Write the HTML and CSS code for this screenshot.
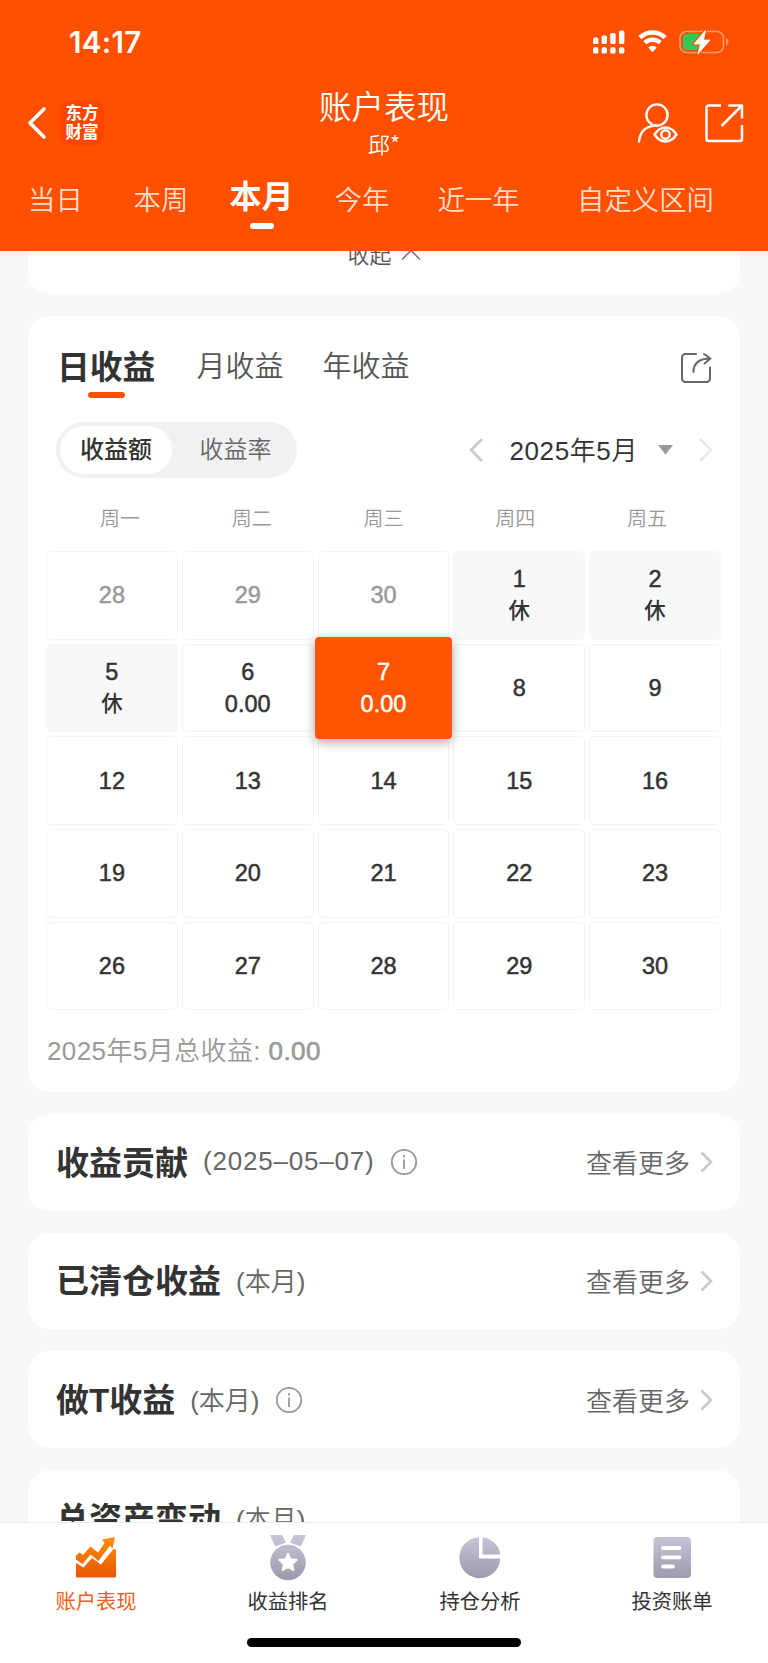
FILE: index.html
```
<!DOCTYPE html>
<html lang="zh-CN">

<head>
    <meta charset="utf-8">
    <meta name="viewport" content="width=device-width, initial-scale=1">
    <title>账户表现</title>
    <link rel="stylesheet" href="styles.css">
</head>

<body>
    <header class="header">
        <div class="status">
            <span class="time">14:17</span>
            <svg class="status-icons" width="136" height="24" viewBox="0 0 136 24" fill="#fff">
                <rect x="0" y="7.5" width="5.4" height="6.5" rx="1.6" />
                <rect x="8.6" y="5.5" width="5.4" height="8.5" rx="1.6" />
                <rect x="17.2" y="3" width="5.4" height="11" rx="1.6" />
                <rect x="26" y="0.5" width="5.4" height="13.5" rx="1.6" />
                <rect x="0" y="17.3" width="5.4" height="6.2" rx="1.6" />
                <rect x="8.6" y="17.3" width="5.4" height="6.2" rx="1.6" />
                <rect x="17.2" y="17.3" width="5.4" height="6.2" rx="1.6" />
                <rect x="26" y="17.3" width="5.4" height="6.2" rx="1.6" />
                <path d="M47 7.6a18 18 0 0 1 25 0" fill="none" stroke="#fff" stroke-width="4.6" />
                <path d="M51.8 12.8a11 11 0 0 1 15.4 0" fill="none" stroke="#fff" stroke-width="4.4" />
                <path d="M55.2 17.4a6.5 6.5 0 0 1 8.6 0L59.5 22.3z" />
                <rect x="87" y="1.5" width="43.5" height="21" rx="6.5" fill="none" stroke="#ff9b6e" stroke-width="1.6" />
                <path d="M133 8.3q2.6 1 2.6 3.7t-2.6 3.7z" fill="#ff9b6e" />
                <path d="M93.5 4H107v16H93.5a3.5 3.5 0 0 1-3.5-3.5v-9A3.5 3.5 0 0 1 93.5 4z" fill="#34c759" />
                <path d="M112.5 0.5L101 14h6.5l-2.7 10L117 10h-6.5z" stroke="#ff5000" stroke-width="3" paint-order="stroke" stroke-linejoin="round" />
                <path d="M112.5 0.5L101 14h6.5l-2.7 10L117 10h-6.5z" stroke="#fff" stroke-width="0.8" stroke-linejoin="round" />
            </svg>
        </div>
        <div class="titlebar">
            <div class="left">
                <svg width="20" height="34" viewBox="0 0 20 34" fill="none" stroke="#fff" stroke-width="3.6" stroke-linecap="round" stroke-linejoin="round">
                    <path d="M17 3L3 17l14 14" />
                </svg>
                <div class="logo">东方<br>财富</div>
            </div>
            <div class="title">
                <h1>账户表现</h1>
                <p>邱*</p>
            </div>
            <div class="right">
                <svg width="42" height="42" viewBox="0 0 42 42" fill="none" stroke="#fff" stroke-width="2.4" stroke-linecap="round">
                    <circle cx="21" cy="13" r="10.6" />
                    <path d="M3 39.5C4 29.5 10 23.6 21 23.6" />
                    <path d="M18.500 32.500Q23 25.500 29.500 25.500T40.500 32.500Q36 39.500 29.500 39.500T18.500 32.500z" stroke-linejoin="round" />
                    <circle cx="29.500" cy="32.500" r="4.200" />
                </svg>
                <svg width="40" height="40" viewBox="0 0 40 40" fill="none" stroke="#fff" stroke-width="2.500" stroke-linecap="butt" stroke-linejoin="round">
                    <path d="M17 2.500H4.500a2 2 0 0 0-2 2V36a2 2 0 0 0 2 2H36a2 2 0 0 0 2-2V22M24.500 2.500H38V15.500M37.500 3L17.500 23" />
                </svg>
            </div>
        </div>
        <nav class="periods">
            <a>当日</a>
            <a>本周</a>
            <a class="active">本月</a>
            <a>今年</a>
            <a>近一年</a>
            <a>自定义区间</a>
        </nav>
    </header>

    <main class="content">
        <section class="card collapse">
            <span>收起</span>
            <svg width="20" height="12" viewBox="0 0 20 12" fill="none" stroke="#777" stroke-width="1.600">
                <path d="M1 10.500L10 1.500l9 9" />
            </svg>
        </section>

        <section class="card calendar">
            <div class="tabs">
                <a class="active">日收益</a>
                <a>月收益</a>
                <a>年收益</a>
                <svg class="share" width="32" height="32" viewBox="0 0 32 32" fill="none" stroke="#666" stroke-width="2" stroke-linecap="round" stroke-linejoin="round">
                    <path d="M16 2H5.500A3.500 3.500 0 0 0 2 5.500v21A3.500 3.500 0 0 0 5.500 30h21a3.500 3.500 0 0 0 3.500-3.500V15.500" />
                    <path d="M13.500 20C13.500 11 18.500 6.500 30.500 6.500M24 2l6.500 4.500-6 5" />
                </svg>
            </div>
            <div class="filter">
                <div class="switch">
                    <span class="on">收益额</span>
                    <span>收益率</span>
                </div>
                <div class="month">
                    <svg width="14" height="24" viewBox="0 0 14 24" fill="none" stroke="#c8c8c8" stroke-width="2.600">
                        <path d="M13 1L2 12l11 11" />
                    </svg>
                    <span class="month-text">2025年5月</span>
                    <svg class="down" width="15" height="10" viewBox="0 0 15 10" fill="#999">
                        <path d="M0 0h15L7.500 9.500z" />
                    </svg>
                    <svg width="14" height="24" viewBox="0 0 14 24" fill="none" stroke="#e8e8e8" stroke-width="2.600">
                        <path d="M1 1l11 11L1 23" />
                    </svg>
                </div>
            </div>
            <div class="week">
                <span>周一</span><span>周二</span><span>周三</span><span>周四</span><span>周五</span>
            </div>
            <div class="days">
                <div class="day old">28</div>
                <div class="day old">29</div>
                <div class="day old">30</div>
                <div class="day rest">1<span>休</span></div>
                <div class="day rest">2<span>休</span></div>
                <div class="day rest">5<span>休</span></div>
                <div class="day">6<span>0.00</span></div>
                <div class="day today">7<span>0.00</span></div>
                <div class="day">8</div>
                <div class="day">9</div>
                <div class="day">12</div>
                <div class="day">13</div>
                <div class="day">14</div>
                <div class="day">15</div>
                <div class="day">16</div>
                <div class="day">19</div>
                <div class="day">20</div>
                <div class="day">21</div>
                <div class="day">22</div>
                <div class="day">23</div>
                <div class="day">26</div>
                <div class="day">27</div>
                <div class="day">28</div>
                <div class="day">29</div>
                <div class="day">30</div>
            </div>
            <p class="total">2025年5月总收益: <b>0.00</b></p>
        </section>

        <section class="card row">
            <h2>收益贡献</h2>
            <span class="sub date">(2025–05–07)</span>
            <svg class="info" width="28" height="28" viewBox="0 0 28 28" fill="none" stroke="#999" stroke-width="1.800">
                <circle cx="14" cy="14" r="12.200" />
                <path d="M14 11.500V21M14 7v2.500" />
            </svg>
            <a class="more">查看更多</a>
            <svg width="13" height="22" viewBox="0 0 13 22" fill="none" stroke="#c8c8c8" stroke-width="2.600">
                <path d="M1.500 1.500L11 11l-9.500 9.500" />
            </svg>
        </section>

        <section class="card row">
            <h2>已清仓收益</h2>
            <span class="sub">(本月)</span>
            <a class="more">查看更多</a>
            <svg width="13" height="22" viewBox="0 0 13 22" fill="none" stroke="#c8c8c8" stroke-width="2.600">
                <path d="M1.500 1.500L11 11l-9.500 9.500" />
            </svg>
        </section>

        <section class="card row">
            <h2>做T收益</h2>
            <span class="sub">(本月)</span>
            <svg class="info" width="28" height="28" viewBox="0 0 28 28" fill="none" stroke="#999" stroke-width="1.800">
                <circle cx="14" cy="14" r="12.200" />
                <path d="M14 11.500V21M14 7v2.500" />
            </svg>
            <a class="more">查看更多</a>
            <svg width="13" height="22" viewBox="0 0 13 22" fill="none" stroke="#c8c8c8" stroke-width="2.600">
                <path d="M1.500 1.500L11 11l-9.500 9.500" />
            </svg>
        </section>

        <section class="card row">
            <h2>总资产变动</h2>
            <span class="sub">(本月)</span>
        </section>
    </main>

    <footer class="footer">
        <nav class="tabbar">
            <a class="active">
                <svg width="48" height="48" viewBox="0 0 48 48" fill="url(#orange)">
                    <defs>
                        <linearGradient id="orange" gradientUnits="userSpaceOnUse" x1="0" y1="4" x2="0" y2="44">
                            <stop offset="0" stop-color="#fb9200" />
                            <stop offset="1" stop-color="#ea5504" />
                        </linearGradient>
                        <linearGradient id="grey" gradientUnits="userSpaceOnUse" x1="0" y1="2" x2="0" y2="46">
                            <stop offset="0" stop-color="#c8c6d8" />
                            <stop offset="1" stop-color="#9b9aac" />
                        </linearGradient>
                    </defs>
                    <path d="M43 4L30 6.500l2.500 3.500-6.500 9.500-7.500-6L11 22l-3.500-2.500L4 22.500v4l6.500 4.500 8-9.500 8 6.500L38 12.500l2.500 3z" />
                    <path d="M44 16.500L41.500 16 29 31.500l-9-6.500-8.500 9.500L4 30V43a1.500 1.500 0 0 0 1.500 1.500h37A1.500 1.500 0 0 0 44 43z" />
                </svg>
                <span>账户表现</span>
            </a>
            <a>
                <svg width="48" height="48" viewBox="0 0 48 48" fill="url(#grey)">
                    <path d="M6 2h12l4 7.500-10.500 4zM42 2H30l-4 7.500 10.500 4z" />
                    <circle cx="24" cy="29.500" r="17.800" />
                    <path d="M24 20.200l2.700 5.800 6.300.8-4.600 4.300 1.200 6.200-5.600-3-5.600 3 1.200-6.200-4.600-4.300 6.300-.8z" fill="#fff" stroke="#fff" stroke-width="1.500" stroke-linejoin="round" />
                </svg>
                <span>收益排名</span>
            </a>
            <a>
                <svg width="48" height="48" viewBox="0 0 48 48" fill="url(#grey)">
                    <path d="M23 4.200A20.500 20.500 0 1 0 44.300 25.500H23z" />
                    <path d="M26.500 4.200A20 20 0 0 1 44.300 21.500H26.500z" />
                </svg>
                <span>持仓分析</span>
            </a>
            <a>
                <svg width="48" height="48" viewBox="0 0 48 48" fill="url(#grey)">
                    <rect x="5.500" y="4" width="37.500" height="41" rx="4" />
                    <path d="M15 15h16.500M15 24.300h16.500M15 33.500H25" stroke="#fff" stroke-width="3.800" stroke-linecap="round" />
                </svg>
                <span>投资账单</span>
            </a>
        </nav>
        <div class="home"></div>
    </footer>
</body>

</html>
```
FILE: styles.css
```
* {
    box-sizing: border-box;
    margin: 0;
    padding: 0;
}

body {
    display: flex;
    flex-direction: column;
    height: 1663px;
    overflow: hidden;
    background-color: #f7f8fa;
    color: #333;
    font-family: "Liberation Sans", "Noto Sans CJK SC", sans-serif;
}

svg {
    display: block;
    flex: none;
}

/* Kopfbereich */
.header {
    height: 251px;
    flex: none;
    background-color: #ff5000;
    color: white;
}

.status {
    display: flex;
    justify-content: space-between;
    align-items: center;
    height: 84px;
    padding: 0 39px 0 69px;
}

.time {
    font-family: Inter, sans-serif;
    font-size: 29.5px;
    font-weight: 600;
    letter-spacing: 0.3px;
}

.titlebar {
    display: grid;
    grid-template-columns: 1fr 200px 1fr;
    height: 83px;
}

.left {
    display: flex;
    align-items: center;
    gap: 13px;
    padding: 0 0 5px 27px;
}

.logo {
    width: 44px;
    height: 44px;
    padding-top: 3px;
    border-radius: 9px;
    background-color: #ff4500;
    font-size: 16.5px;
    font-weight: 700;
    line-height: 19px;
    text-align: center;
}

.title {
    margin-top: -2px;
    text-align: center;
    font-family: "Noto Sans CJK SC", sans-serif;
}

.title h1 {
    font-size: 32.5px;
    font-weight: 350;
    line-height: 46px;
}

.title p {
    font-size: 22px;
    font-weight: 350;
    line-height: 30px;
}

.right {
    display: flex;
    justify-content: flex-end;
    align-items: center;
    gap: 26px;
    padding: 0 24px 5px 0;
}

.periods {
    display: grid;
    grid-template-columns: 111px 100px 101px 100px 133px 201px;
    height: 70px;
    text-align: center;
    font-size: 27.4px;
    font-weight: 350;
    line-height: 68px;
    color: #ffdccb;
}

.periods .active {
    font-size: 32px;
    font-weight: 700;
    line-height: 60px;
    color: white;
}

.periods .active::after {
    content: "";
    display: block;
    width: 24px;
    height: 6px;
    margin: -4px auto 0;
    border-radius: 3px;
    background-color: white;
}

/* Inhalt */
.content {
    flex: 1;
    min-height: 0;
    overflow: hidden;
    padding: 0 28px;
}

.card {
    margin-bottom: 22.2px;
    border-radius: 22px;
    background-color: white;
}

.collapse {
    display: flex;
    justify-content: center;
    gap: 9px;
    height: 80px;
    margin-top: -37.2px;
    padding-top: 26px;
    font-size: 22px;
    font-weight: 350;
    line-height: 32px;
    color: #555;
}

.collapse svg {
    margin-top: 9px;
}

.calendar {
    height: 776px;
    padding: 19px 19px 0 18px;
}

.tabs {
    display: flex;
    height: 87px;
    padding: 0 9px 0 11px;
    font-size: 29px;
    font-weight: 350;
    line-height: 65px;
    color: #555;
}

.tabs a {
    margin-right: 39px;
}

.tabs .active {
    margin-right: 41px;
    font-size: 32.8px;
    font-weight: 700;
    color: #333;
}

.tabs .active::after {
    content: "";
    display: block;
    width: 37px;
    height: 6px;
    margin: -8px auto 0;
    border-radius: 3px;
    background-color: #ff5000;
}

.share {
    margin: 17px 0 0 auto;
}

.filter {
    display: flex;
    justify-content: space-between;
    padding: 0 8px 0 10px;
}

.switch {
    display: flex;
    width: 241px;
    height: 56px;
    padding: 4px;
    border-radius: 28px;
    background-color: #f1f1f4;
    font-size: 24px;
    font-weight: 350;
    line-height: 48px;
    color: #666;
    text-align: center;
}

.switch span {
    flex: 1;
    padding-left: 6px;
}

.switch .on {
    flex: none;
    width: 112px;
    padding: 0;
    border-radius: 24px;
    background-color: white;
    color: #333;
    font-weight: 500;
}

.month {
    display: flex;
    align-items: center;
}

.month-text {
    margin: -3px 0 0 27px;
    font-size: 26px;
    letter-spacing: 0.6px;
    font-weight: 350;
}

.down {
    margin: 0 26px 0 20px;
}

.week {
    display: grid;
    grid-template-columns: repeat(5, 1fr);
    height: 73px;
    padding: 0 8px;
    text-align: center;
    font-size: 20px;
    font-weight: 350;
    line-height: 82px;
    color: #999;
}

.days {
    display: grid;
    grid-template-columns: repeat(5, 1fr);
    grid-auto-rows: 88.7px;
    gap: 4px;
}

.day {
    display: flex;
    flex-direction: column;
    justify-content: center;
    align-items: center;
    border: 1px solid #f4f4f5;
    border-radius: 5px;
    font-size: 23.5px;
    font-weight: 500;
    line-height: 32px;
    -webkit-text-stroke: 0.5px;
}

.day span {
    display: block;
    font-size: 23.5px;
}

.old {
    color: #999;
}

.rest {
    border-color: #f7f8fa;
    background-color: #f7f8fa;
}

.rest span {
    font-size: 21.5px;
    -webkit-text-stroke: 0;
}

.today {
    margin: -7px -3px;
    border: none;
    border-radius: 4px;
    background-color: #ff5500;
    color: white;
    box-shadow: 0 3px 12px rgba(0, 0, 0, 0.35);
    z-index: 1;
}

.total {
    margin-top: 21px;
    padding-left: 1px;
    font-size: 26px;
    font-weight: 350;
    line-height: 40px;
    letter-spacing: 0.4px;
    color: #999;
}

.total b {
    font-weight: 400;
    -webkit-text-stroke: 0.6px;
}

.row {
    display: flex;
    align-items: center;
    height: 96.4px;
    padding: 0 27px 0 28px;
}

.row h2 {
    margin-top: -3px;
    font-size: 33px;
    font-weight: 700;
}

.sub {
    margin: -2px 0 0 15px;
    font-size: 26px;
    font-weight: 350;
    color: #666;
}

.date {
    letter-spacing: 0.8px;
}

.info {
    margin-left: 15px;
}

.more {
    margin: -1px 10px 0 auto;
    font-size: 26px;
    font-weight: 350;
    color: #666;
}

/* Fußleiste */
.footer {
    height: 141px;
    flex: none;
    border-top: 1px solid #ececee;
    background-color: white;
}

.tabbar {
    display: grid;
    grid-template-columns: repeat(4, 1fr);
    height: 115px;
    padding-top: 10px;
}

.tabbar a {
    display: flex;
    flex-direction: column;
    align-items: center;
    font-size: 20.3px;
    line-height: 42px;
}

.tabbar svg {
    width: 50px;
}

.tabbar .active {
    color: #f06020;
}

.home {
    width: 274px;
    height: 9px;
    margin: 0 auto;
    border-radius: 5px;
    background-color: black;
}
```
